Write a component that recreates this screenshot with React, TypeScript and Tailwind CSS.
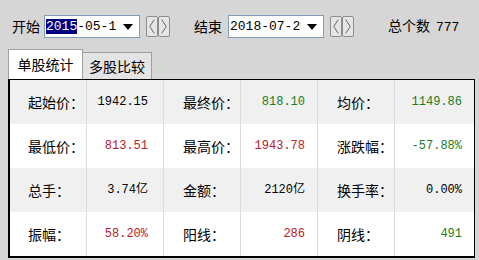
import React from 'react';

const cjk = "font-['Noto_Sans_CJK_SC','Noto_Sans',sans-serif]";
const mono = "font-['Liberation_Mono','Noto_Sans_CJK_SC',monospace]";

type Cell = { label: string; value: string; color?: string };

const rows: Cell[][] = [
  [
    { label: '起始价：', value: '1942.15' },
    { label: '最终价：', value: '818.10', color: 'text-[#1b7c1b]' },
    { label: '均价：', value: '1149.86', color: 'text-[#1b7c1b]' },
  ],
  [
    { label: '最低价：', value: '813.51', color: 'text-[#b8202a]' },
    { label: '最高价：', value: '1943.78', color: 'text-[#b8202a]' },
    { label: '涨跌幅：', value: '-57.88%', color: 'text-[#1b7c1b]' },
  ],
  [
    { label: '总手：', value: '3.74亿' },
    { label: '金额：', value: '2120亿' },
    { label: '换手率：', value: '0.00%' },
  ],
  [
    { label: '振幅：', value: '58.20%', color: 'text-[#b8202a]' },
    { label: '阳线：', value: '286', color: 'text-[#b8202a]' },
    { label: '阴线：', value: '491', color: 'text-[#1b7c1b]' },
  ],
];

function DateBox({ hi, rest }: { hi?: string; rest: string }) {
  return (
    <div className="flex h-[23px] w-[96px] items-center border border-[#7f9db9] bg-white">
      <div className={`flex-1 overflow-hidden whitespace-nowrap pl-[1px] text-[13px] leading-[19px] text-black ${mono}`}>
        {hi && <span className="bg-[#000080] text-white">{hi}</span>}
        {rest}
      </div>
      <div className="flex w-[22px] items-center justify-center">
        <svg width="10" height="6" viewBox="0 0 10 6">
          <path d="M0 0 L10 0 L5 6 Z" fill="#000" />
        </svg>
      </div>
    </div>
  );
}

function Spin() {
  return (
    <div className="flex h-[21px]">
      {['M8 3 L3 10.5 L8 18', 'M3 3 L8 10.5 L3 18'].map((d, i) => (
        <div key={i} className="flex h-[21px] w-[12px] items-center justify-center rounded-[2px] border border-[#8c8c8c] bg-[#e6e6e6]">
          <svg width="11" height="21" viewBox="0 0 11 21">
            <path d={d} stroke="#555" strokeWidth="1" fill="none" />
          </svg>
        </div>
      ))}
    </div>
  );
}

export default function App() {
  return (
    <div className={`h-[260px] w-[479px] overflow-hidden bg-[#d6d6d6] pt-[15px] ${cjk}`}>
      {/* top bar */}
      <div className="flex h-[23px] items-center pl-[12px] text-[14px] text-black">
        <span>开始</span>
        <div className="ml-[4px]">
          <DateBox hi="2015" rest="-05-19" />
        </div>
        <div className="ml-[6px]">
          <Spin />
        </div>
        <span className="ml-[24px]">结束</span>
        <div className="ml-[6px]">
          <DateBox rest="2018-07-20" />
        </div>
        <div className="ml-[6px]">
          <Spin />
        </div>
        <span className="ml-[34px]">
          总个数<span className={`ml-[6px] text-[13px] ${mono}`}>777</span>
        </span>
      </div>

      {/* tabs */}
      <div className="mt-[11px] flex items-end pl-[8px] text-[14px] text-black">
        <div className="flex h-[30px] w-[75px] items-center justify-center border border-b-0 border-[#a0a0a0] bg-white">
          单股统计
        </div>
        <div className="flex h-[27px] w-[69px] items-center justify-center border border-b-0 border-l-0 border-[#a0a0a0] bg-[#e4e4e4]">
          多股比较
        </div>
      </div>

      {/* panel */}
      <div className="ml-[8px] w-[467px] border-t border-r border-l-2 border-b-2 border-black">
        {rows.map((row, ri) => (
          <div
            key={ri}
            className={`grid h-[44px] grid-cols-[76px_77px_77px_77px_77px_1fr] ${ri % 2 === 0 ? 'bg-[#f0f0f0]' : 'bg-white'}`}
          >
            {row.map((c, ci) => (
              <React.Fragment key={ci}>
                <div className={`flex items-center text-[14px] text-black ${ci === 0 ? 'pl-[18px]' : 'border-l border-[#dcdcdc] pl-[19px]'}`}>
                  {c.label}
                </div>
                <div
                  className={`flex items-center justify-end border-l border-[#dcdcdc] text-[12px] ${mono} ${c.color ?? 'text-black'} ${ci === 0 ? 'pr-[15px]' : 'pr-[12px]'}`}
                >
                  {c.value}
                </div>
              </React.Fragment>
            ))}
          </div>
        ))}
      </div>
    </div>
  );
}
